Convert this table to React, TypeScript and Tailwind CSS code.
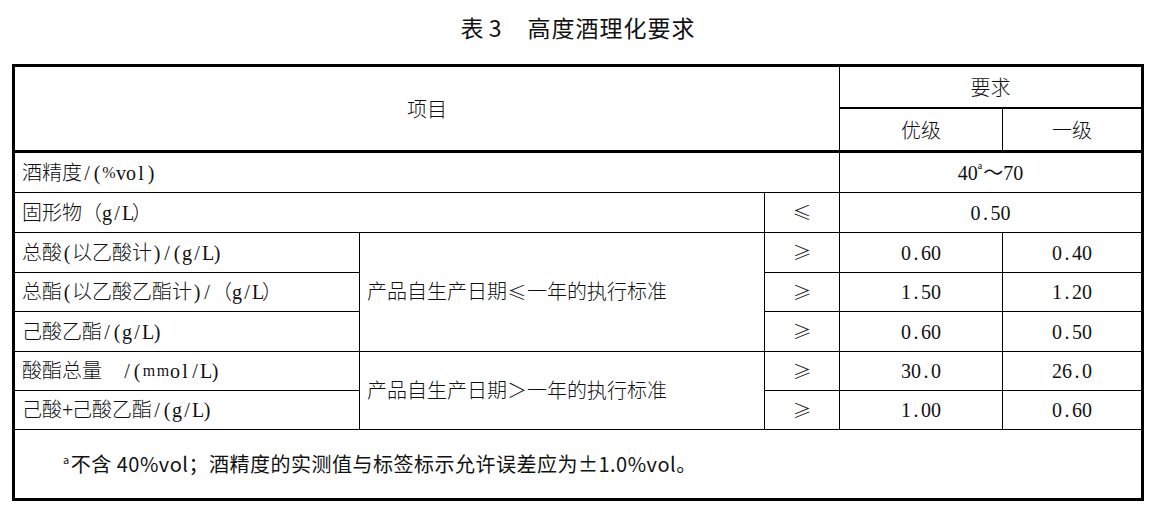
import React from "react";

const serif = "font-['Liberation_Serif','Noto_Sans_CJK_SC',serif]";

function Txt({ s }: { s: string }) {
  const out: React.ReactNode[] = [];
  let buf = "";
  const flush = () => {
    if (buf) {
      out.push(<span key={`c${out.length}`}>{buf}</span>);
      buf = "";
    }
  };
  for (const ch of s) {
    const code = ch.codePointAt(0) || 0;
    if (code < 128) {
      flush();
      if (ch === "%" || ch === "m") {
        out.push(
          <span key={`a${out.length}`} className="inline-block w-[14px] text-center text-[16px]">
            {ch}
          </span>
        );
      } else {
        out.push(
          <span key={`a${out.length}`} className="inline-block w-[10px] text-center">
            {ch}
          </span>
        );
      }
    } else if (ch === "≤" || ch === "≥") {
      flush();
      out.push(
        <span
          key={`w${out.length}`}
          className="inline-block w-[20px] text-center font-['Noto_Sans_CJK_SC',sans-serif] text-[19px]"
        >
          {ch}
        </span>
      );
    } else {
      buf += ch;
    }
  }
  flush();
  return <>{out}</>;
}

function Cell({
  className = "",
  children,
}: {
  className?: string;
  children?: React.ReactNode;
}) {
  return (
    <div className={`flex items-center border-black whitespace-nowrap ${className}`}>{children}</div>
  );
}

const leftCls = `border-r border-b justify-start pl-[7px] ${serif} text-[20px] font-light`;
const symCls = `border-r border-b justify-center font-['Noto_Sans_CJK_SC',sans-serif] text-[19px] font-light`;
const numCls = `border-b justify-center ${serif} text-[20px]`;
const headCls = "justify-center font-['Noto_Sans_CJK_SC',sans-serif] text-[20px] font-light";

type Row = { name: string; op: string; a: string; b: string };

export default function App() {
  const groupA: Row[] = [
    { name: "总酸(以乙酸计)/(g/L)", op: "≥", a: "0.60", b: "0.40" },
    { name: "总酯(以乙酸乙酯计)/（g/L）", op: "≥", a: "1.50", b: "1.20" },
    { name: "己酸乙酯/(g/L)", op: "≥", a: "0.60", b: "0.50" },
  ];
  const groupB: Row[] = [
    { name: "酸酯总量　/(mmol/L)", op: "≥", a: "30.0", b: "26.0" },
    { name: "己酸+己酸乙酯/(g/L)", op: "≥", a: "1.00", b: "0.60" },
  ];

  const renderRow = (r: Row, i: number, span?: React.ReactNode) => (
    <React.Fragment key={r.name}>
      <Cell className={leftCls}>
        <Txt s={r.name} />
      </Cell>
      {i === 0 && span}
      <Cell className={symCls}>{r.op}</Cell>
      <Cell className={`${numCls} border-r`}>
        <Txt s={r.a} />
      </Cell>
      <Cell className={numCls}>
        <Txt s={r.b} />
      </Cell>
    </React.Fragment>
  );

  return (
    <div className="w-[1156px] h-[511px] bg-white text-[#111]">
      <div className="h-[54px] flex items-center justify-center font-['Noto_Sans_CJK_SC',sans-serif] text-[23px] font-normal">
        <span>表 3</span>
        <span className="ml-[26px] tracking-[1px]">高度酒理化要求</span>
      </div>
      <div className="ml-[12px] mt-[10px] w-[1132px] border-[3px] border-black grid grid-cols-[345px_405px_75px_163px_138px] grid-rows-[42px_44px_40px_40px_40px_39px_40px_39px_39px_68px]">
        <Cell className={`col-span-3 row-span-2 border-r border-b-[3px] ${headCls}`}>项目</Cell>
        <Cell className={`col-span-2 border-b-2 ${headCls}`}>要求</Cell>
        <Cell className={`border-r border-b-[3px] ${headCls}`}>优级</Cell>
        <Cell className={`border-b-[3px] ${headCls}`}>一级</Cell>

        <Cell className={`col-span-3 ${leftCls}`}>
          <Txt s="酒精度/(%vol)" />
        </Cell>
        <Cell className={`col-span-2 ${numCls}`}>
          <Txt s="40" />
          <sup className="text-[10px] -top-[0.7em] mr-[1px]">a</sup>
          ～<Txt s="70" />
        </Cell>

        <Cell className={`col-span-2 ${leftCls}`}>
          <Txt s="固形物（g/L）" />
        </Cell>
        <Cell className={symCls}>≤</Cell>
        <Cell className={`col-span-2 ${numCls}`}>
          <Txt s="0.50" />
        </Cell>

        {groupA.map((r, i) =>
          renderRow(
            r,
            i,
            <Cell key="spanA" className={`row-span-3 ${leftCls}`}>
              <Txt s="产品自生产日期≤一年的执行标准" />
            </Cell>
          )
        )}
        {groupB.map((r, i) =>
          renderRow(
            r,
            i,
            <Cell key="spanB" className={`row-span-2 ${leftCls}`}>
              <Txt s="产品自生产日期＞一年的执行标准" />
            </Cell>
          )
        )}

        <Cell className="col-span-5 justify-start pl-[48px] font-['Noto_Sans_CJK_SC',sans-serif] text-[20px] tracking-[0.5px]">
          <sup className="text-[11px] -top-[0.5em] mr-[1px]">a</sup>
          不含 40%vol；酒精度的实测值与标签标示允许误差应为±1.0%vol。
        </Cell>
      </div>
    </div>
  );
}
